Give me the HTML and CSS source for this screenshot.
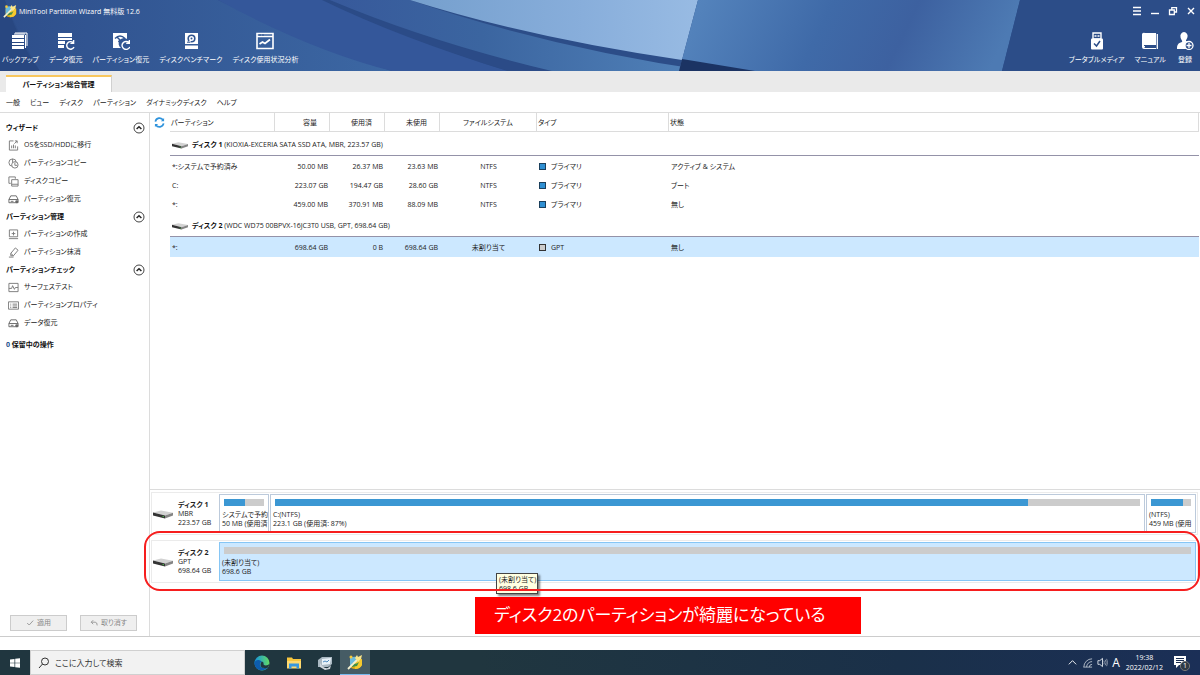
FILE: index.html
```html
<!DOCTYPE html>
<html lang="ja">
<head>
<meta charset="utf-8">
<title>MiniTool Partition Wizard</title>
<link rel="stylesheet" href="styles.css">
</head>
<body>
<svg class="defs" width="0" height="0" aria-hidden="true">
  <defs>
    <symbol id="i-wizard" viewBox="0 0 16 16">
      <path d="M3 5q5-3 12 0v6q-2 4-7 4-4 0-5-3z" fill="#d9a716"/><path d="M3 4q3-2 8-1l-1 6-5 3-2-1z" fill="#6bb9dc"/>
      <path d="M7 8q4 0 8-3v6q-2 4-7 4z" fill="#f5c92d"/><path d="M5 9q4 2 7-1l-2 4-5 1z" fill="#3f8f4a"/>
      <path d="M1 15 10 6" stroke="#f4f1cf" stroke-width="1.8"/><path d="m8 4 2-3 1 2 4-2-1 4-3 3z" fill="#fbe58a"/><circle cx="4" cy="3" r="1.500" fill="#f7c938"/>
    </symbol>
    <symbol id="i-up" viewBox="0 0 12 12"><circle cx="6" cy="6" r="5" fill="none" stroke="#444"/><path d="M3.600 7 6 4.800 8.400 7" fill="none" stroke="#222" stroke-width="1.500"/></symbol>
    <symbol id="i-drive" viewBox="0 0 20 10">
      <path d="M0 3.500 8 1.500l12 2.200L12 6.500z" fill="#d2d2d2"/><path d="m0 3.500 12 3v3L0 6.500z" fill="#333"/><path d="m12 6.500 8-2.800v2.800l-8 3z" fill="#858585"/><path d="m9.500 7.400 1.500.4" stroke="#4ec04e"/>
    </symbol>
    <symbol id="i-disk" viewBox="0 0 12 12"><path d="M1 6 3 2h6l2 4v3.500H1zM1 6h10" fill="none" stroke="#666"/><path d="M3 8h3" stroke="#666"/><circle cx="9.500" cy="8.500" r="1.600" fill="#666"/></symbol>
  </defs>
</svg>
<div class="app">
  <header class="banner">
    <svg class="banner-art" viewBox="0 0 1200 71" preserveAspectRatio="none" aria-hidden="true">
      <defs>
        <linearGradient id="g2"><stop offset="0" stop-color="#759fcd"/><stop offset=".6" stop-color="#88aedb"/><stop offset="1" stop-color="#98bbe3"/></linearGradient>
        <linearGradient id="g3" x1="0" y1="0" x2="1" y2=".1"><stop offset="0" stop-color="#5787bf"/><stop offset=".45" stop-color="#3f6aa8"/><stop offset=".7" stop-color="#3d61a0"/><stop offset="1" stop-color="#4d7ab3"/></linearGradient>
        <linearGradient id="g4"><stop offset="0" stop-color="#37599b"/><stop offset=".4" stop-color="#3b65a0"/><stop offset="1" stop-color="#5283ba"/></linearGradient>
        <linearGradient id="g5"><stop offset="0" stop-color="#2e4f8c"/><stop offset="1" stop-color="#3c67a3"/></linearGradient>
      </defs>
      <rect width="1200" height="71" fill="#2c4d88"/>
      <path d="M0 0h5Q20 45 40 71H0z" fill="#284781"/>
      <path d="M5 0H218Q320 48 392 71H40Q20 38 5 0z" fill="url(#g5)"/>
      <path d="M218 0H330Q430 48 508 71H392Q310 50 218 0z" fill="#34579a"/>
      <path d="M330 0Q420 40 552 71H508Q400 38 322 0z" fill="#2b4b87"/>
      <path d="M330 0h80Q550 48 710 71H552Q430 42 330 0z" fill="url(#g4)"/>
      <path d="M410 0h288l-16 60Q530 38 410 0z" fill="url(#g2)"/>
      <path d="M698 0h322l-18 71H679z" fill="url(#g3)"/>
      <path d="m682 59 73 12h-76z" fill="#1b3363"/>
      <path d="M1020 0h180v71h-198z" fill="#2c4d88"/>
    </svg>
    <div class="titlebar">
      <svg class="logo"><use href="#i-wizard"/></svg>
      <h1>MiniTool Partition Wizard 無料版 12.6</h1>
      <div class="window-buttons">
        <button aria-label="メニュー"><svg viewBox="0 0 10 10"><path d="M1 1.500h8M1 5h8M1 8.500h8" stroke="#fff" stroke-width="1.300"/></svg></button>
        <button aria-label="最小化"><svg viewBox="0 0 10 10"><path d="M1 7.500h8" stroke="#fff" stroke-width="1.400"/></svg></button>
        <button aria-label="元に戻す"><svg viewBox="0 0 10 10" fill="none" stroke="#fff" stroke-width="1.300"><path d="M1.500 4h4.800v4.500H1.500zM3.800 4V1.700h4.700V6H6.300"/></svg></button>
        <button aria-label="閉じる"><svg viewBox="0 0 10 10"><path d="m2 2 6 6M8 2 2 8" stroke="#fff" stroke-width="1.400"/></svg></button>
      </div>
    </div>
    <nav class="toolbar">
      <button class="tool"><svg viewBox="0 0 18 18"><path d="M4 1h12v13M3 2h11" fill="none" stroke="#fff"/><path d="M1 3h12v3H1zM1 7h12v3H1zM1 11h12v2H1zM1 14h12v3H1z" fill="#fff"/><path d="M14.500 3v13" stroke="#fff"/></svg>バックアップ</button>
      <button class="tool"><svg viewBox="0 0 18 18"><path d="M1 1h14v4H1zM1 6h14v2H1zM1 9h7v3H1zM1 13h6v3H1z" fill="#fff"/><path d="M16 10.500a3.800 3.800 0 1 0 1 4.500M16.600 8v3.400h-3.200" fill="none" stroke="#fff" stroke-width="1.400"/></svg>データ復元</button>
      <button class="tool"><svg viewBox="0 0 18 18"><path d="M1 1h14v6a5 5 0 0 0-6 9H1z" fill="#fff"/><path d="M3 6.500q5-5 10 0" fill="none" stroke="#315590" stroke-width="1.500"/><path d="m5 5 3 3-1.500 2" fill="none" stroke="#315590" stroke-width="1.500"/><path d="M17 10.700a4 4 0 1 0 .8 4.200M17.400 8v3.400h-3.200" fill="none" stroke="#fff" stroke-width="1.400"/></svg>パーティション復元</button>
      <button class="tool"><svg viewBox="0 0 18 18"><path d="M3 1h13v11H3zM3 13.500h13V17H3z" fill="#fff"/><circle cx="9.500" cy="6.500" r="3.300" fill="none" stroke="#315590" stroke-width="1.600"/><path d="m9.500 6.500-2 3.500" stroke="#fff" stroke-width="1.500"/><circle cx="9.500" cy="6.500" r="1" fill="#315590"/><path d="M5 10.200h3" stroke="#315590"/></svg>ディスクベンチマーク</button>
      <button class="tool"><svg viewBox="0 0 18 18"><path d="M1 1.500h16v15H1z" fill="none" stroke="#fff" stroke-width="1.600"/><path d="M1 4.500h16" stroke="#fff" stroke-width="1.500"/><path d="m3.500 12 3-2 2.500 1.500 5-4" fill="none" stroke="#fff" stroke-width="1.800"/><path d="M3 3h2M6 3h2" stroke="#315590"/></svg>ディスク使用状況分析</button>
      <span class="spacer"></span>
      <button class="tool"><svg viewBox="0 0 18 18"><path d="M5 1h8v6H5z" fill="none" stroke="#fff" stroke-width="1.400"/><path d="M6.500 4h2M9.500 4h2" stroke="#fff" stroke-width="1.600"/><rect x="3" y="6.500" width="12" height="11" rx="1" fill="#fff"/><path d="m6 11.500 2.500 2.500L12 9" fill="none" stroke="#2c4d88" stroke-width="1.500"/></svg>ブータブルメディア</button>
      <button class="tool"><svg viewBox="0 0 18 18"><path d="M4 1h11v12H4v2h11v2H3a2 2 0 0 1-2-2V3a2 2 0 0 1 3-2z" fill="#fff"/><path d="M3 13.500h12M3.500 15.500H15" stroke="#2c4d88"/><path d="M16.300 2v15" stroke="#fff" stroke-width="1.300"/></svg>マニュアル</button>
      <button class="tool"><svg viewBox="0 0 18 18"><path d="M8 0a4 4 0 0 1 3.500 5c-.3 2-2 3-1.500 4l3 1v7H1c0-4 1-6 5-7 1-1-1.500-3-1.500-5A4 4 0 0 1 8 0z" fill="#fff"/><circle cx="13" cy="13.500" r="4" fill="#2c4d88" stroke="#fff" stroke-width="1.300"/><path d="M13 11v5M10.500 13.500h5" stroke="#fff" stroke-width="1.300"/></svg>登録</button>
    </nav>
  </header>
  <div class="tabs" role="tablist"><button class="tab" role="tab" aria-selected="true">パーティション総合管理</button></div>
  <nav class="menubar">
    <button>一般</button><button>ビュー</button><button>ディスク</button><button>パーティション</button><button>ダイナミックディスク</button><button>ヘルプ</button>
  </nav>
  <div class="body">
    <aside class="sidebar">
      <section>
        <h2>ウィザード<svg><use href="#i-up"/></svg></h2>
        <button class="action"><svg viewBox="0 0 12 12" fill="none" stroke="#777"><path d="M6 1H1.500v10h9V7"/><path d="M4 9V6M6 9V5M8 9V6M7 4l3-3M7.500 1H10v2.500"/></svg>OSをSSD/HDDに移行</button>
        <button class="action"><svg viewBox="0 0 12 12" fill="none" stroke="#777"><circle cx="5" cy="5" r="4"/><path d="M5 5V1M5 5h5"/><circle cx="7.500" cy="7.500" r="3.500" fill="#fff"/><path d="M7.500 5v3H10"/></svg>パーティションコピー</button>
        <button class="action"><svg viewBox="0 0 12 12" fill="none" stroke="#777"><path d="M3 8H1V1h7v2"/><path d="M4 4h7v7H4zM4 9h7"/></svg>ディスクコピー</button>
        <button class="action"><svg><use href="#i-disk"/></svg>パーティション復元</button>
      </section>
      <section>
        <h2>パーティション管理<svg><use href="#i-up"/></svg></h2>
        <button class="action"><svg viewBox="0 0 12 12" fill="none" stroke="#777"><path d="M1.500 1h9v7.500h-9zM1 10.500h10M6 3v4M4 5h4"/></svg>パーティションの作成</button>
        <button class="action"><svg viewBox="0 0 12 12" fill="none" stroke="#777"><path d="m3 7 5-6 3 2.500-5 6H3zM3 7l3 2.500M1 11h5"/></svg>パーティション抹消</button>
      </section>
      <section>
        <h2>パーティションチェック<svg><use href="#i-up"/></svg></h2>
        <button class="action"><svg viewBox="0 0 12 12" fill="none" stroke="#777"><path d="M1 1.500h10v9H1z"/><path d="M1 7h3l1-3 2 4 1-2h3"/></svg>サーフェステスト</button>
        <button class="action"><svg viewBox="0 0 12 12" fill="none" stroke="#777"><path d="M.5 2h11v8H.5zM2.500 4.500h1M5 4.500h5M2.500 6.500h1M5 6.500h5M2.500 8.200h1M5 8.200h5"/></svg>パーティションプロパティ</button>
        <button class="action"><svg><use href="#i-disk"/></svg>データ復元</button>
      </section>
      <p class="pending"><span>0</span> 保留中の操作</p>
      <div class="commit">
        <button disabled><svg viewBox="0 0 10 10"><path d="m1.500 5 2.500 2.500L9 2" fill="none" stroke="#999" stroke-width="1.200"/></svg>適用</button>
        <button disabled><svg viewBox="0 0 10 10"><path d="M4 1.500 1.500 4 4 6.500M1.500 4h5Q9 4 9 8" fill="none" stroke="#999" stroke-width="1.200"/></svg>取り消す</button>
      </div>
    </aside>
    <main class="main">
      <div class="list">
        <button class="refresh" aria-label="更新"><svg viewBox="0 0 12 12" fill="none" stroke="#2f93dc" stroke-width="1.800"><path d="M1.500 5a4.600 4.600 0 0 1 8.500-1.500M10.500 7A4.600 4.600 0 0 1 2 8.500"/><path d="M11 1v3.500H7.500zM1 11V7.500h3.500z" fill="#2f93dc" stroke="none"/></svg></button>
        <table>
          <colgroup><col class="c-name"><col class="c-num"><col class="c-num"><col class="c-num"><col class="c-fs"><col class="c-type"><col></colgroup>
          <thead><tr><th>パーティション</th><th class="num">容量</th><th class="num">使用済</th><th class="num">未使用</th><th class="mid">ファイルシステム</th><th>タイプ</th><th>状態</th></tr></thead>
          <tbody>
            <tr class="group"><th colspan="7"><svg><use href="#i-drive"/></svg><b>ディスク 1</b> (KIOXIA-EXCERIA SATA SSD ATA, MBR, 223.57 GB)</th></tr>
            <tr><td>*:システムで予約済み</td><td class="num">50.00 MB</td><td class="num">26.37 MB</td><td class="num">23.63 MB</td><td class="mid">NTFS</td><td class="type"><i class="primary"></i>プライマリ</td><td>アクティブ &amp; システム</td></tr>
            <tr><td>C:</td><td class="num">223.07 GB</td><td class="num">194.47 GB</td><td class="num">28.60 GB</td><td class="mid">NTFS</td><td class="type"><i class="primary"></i>プライマリ</td><td>ブート</td></tr>
            <tr><td>*:</td><td class="num">459.00 MB</td><td class="num">370.91 MB</td><td class="num">88.09 MB</td><td class="mid">NTFS</td><td class="type"><i class="primary"></i>プライマリ</td><td>無し</td></tr>
            <tr class="group"><th colspan="7"><svg><use href="#i-drive"/></svg><b>ディスク 2</b> (WDC WD75 00BPVX-16JC3T0 USB, GPT, 698.64 GB)</th></tr>
            <tr class="selected"><td>*:</td><td class="num">698.64 GB</td><td class="num">0 B</td><td class="num">698.64 GB</td><td class="mid">未割り当て</td><td class="type"><i></i>GPT</td><td>無し</td></tr>
          </tbody>
        </table>
      </div>
      <section class="map">
        <div class="disk">
          <div class="disk-label"><svg><use href="#i-drive"/></svg><p><b>ディスク 1</b><br>MBR<br>223.57 GB</p></div>
          <div class="part small"><div class="usage"><span style="width:53%"></span></div><p>システムで予約<br>50 MB (使用済</p></div>
          <div class="part"><div class="usage"><span style="width:87%"></span></div><p>C:(NTFS)<br>223.1 GB (使用済: 87%)</p></div>
          <div class="part small"><div class="usage"><span style="width:81%"></span></div><p>(NTFS)<br>459 MB (使用</p></div>
        </div>
        <div class="disk">
          <div class="disk-label"><svg><use href="#i-drive"/></svg><p><b>ディスク 2</b><br>GPT<br>698.64 GB</p></div>
          <div class="part active"><div class="usage"></div><p>(未割り当て)<br>698.6 GB</p></div>
          <div class="tooltip" role="tooltip">(未割り当て)<br>698.6 GB</div>
          <div class="highlight"></div>
          <div class="callout">ディスク2のパーティションが綺麗になっている</div>
        </div>
      </section>
    </main>
  </div>
</div>
<footer class="taskbar">
  <button class="start" aria-label="スタート"><svg viewBox="0 0 12 12" fill="#fff"><path d="M1 2.500 5.500 2v3.700H1zM6.200 1.800 11 1.200v4.500H6.200zM1 6.300h4.500V10L1 9.500zM6.200 6.300H11v4.500l-4.800-.6z"/></svg></button>
  <label class="search"><svg viewBox="0 0 12 12" fill="none" stroke="#333"><circle cx="7" cy="4.500" r="3.500"/><path d="M4.500 7 1 11"/></svg><input type="text" aria-label="検索" placeholder="ここに入力して検索"></label>
  <button class="pin" aria-label="Edge"><svg viewBox="0 0 16 16"><defs><linearGradient id="e1" x2="1"><stop offset="0" stop-color="#1493df"/><stop offset="1" stop-color="#63dc63"/></linearGradient></defs><circle cx="8" cy="8" r="7.500" fill="url(#e1)"/><path d="M.5 8C1 4.500 5 4 8 6.500c-3 1-3 6 1.500 6.500 2 .2 4-.5 5-1.300C12 16.500 1 17.500.5 8z" fill="#0e5cad"/><path d="M8 6.500c2.500 1 1 2.500 2 3.500 1.500 1 4.500.5 5.500-1.500-.5 2-.7 2.700-1.500 4-3 1.500-8 .5-7.500-3 0-1.500 1-2.700 1.500-3z" fill="#20363f"/></svg></button>
  <button class="pin" aria-label="エクスプローラー"><svg viewBox="0 0 16 16"><path d="M1 2.500h5l1 1.500h8v9H1z" fill="#f8c63e"/><path d="M1 6h14v7.500H1z" fill="#ffd970"/><path d="M3 13.500V8.500h10v5h-2.500v-2h-5v2z" fill="#3997df"/></svg></button>
  <button class="pin" aria-label="ディスク ツール"><svg viewBox="0 0 16 16"><path d="m1 5 4-3h10v7l-4 3H1z" fill="#aab8c2"/><path d="m5 4 9-1-1 6-8 1z" fill="#e8f1f7"/><path d="M3 8q3 6 8 5l3-3-1 4-5 1-5-3z" fill="#d0d6dc"/><path d="m6 7 2-1 2 1 2-2" fill="none" stroke="#4f8cc0"/></svg></button>
  <button class="pin current" aria-label="Partition Wizard"><svg><use href="#i-wizard"/></svg></button>
  <span class="spacer"></span>
  <div class="tray">
    <svg viewBox="0 0 12 12"><path d="m2 8 4-4 4 4" fill="none" stroke="#fff"/></svg>
    <svg viewBox="0 0 12 12" fill="none" stroke="#b6becb"><path d="M2 11A9 9 0 0 1 11 2M5 11a6 6 0 0 1 6-6M8 11a3 3 0 0 1 3-3M1.500 11H11"/></svg>
    <svg viewBox="0 0 12 12" fill="none" stroke="#dde2ea"><path d="M1 4h2l3-2.500v9L3 8H1z"/><path d="M7.500 4q1 2 0 4M9 3q2 3 0 6M10.500 2q2 4 0 8" stroke="#8d97aa"/></svg>
    <span class="ime">A</span>
    <time datetime="2022-02-12T19:38">19:38<br>2022/02/12</time>
    <button aria-label="通知"><svg viewBox="0 0 18 18"><path d="M1 2h12v9H6l-3 3v-3H1z" fill="#fff"/><path d="M3 4.500h8M3 6.500h8M3 8.500h5" stroke="#1b2e52"/><circle cx="12" cy="12" r="4.600" fill="#303a45" stroke="#777"/></svg><span>1</span></button>
  </div>
</footer>
</body>
</html>
```
FILE: styles.css
```css
* { box-sizing: border-box; }
body {
  margin: 0;
  min-height: 100vh;
  display: flex;
  flex-direction: column;
  background: #fff;
  color: #222;
  font: 7px/10px "Open Sans", "Noto Sans CJK JP", sans-serif;
  font-feature-settings: "palt";
}
button, input { font: inherit; font-feature-settings: inherit; color: inherit; border: 0; padding: 0; margin: 0; background: none; white-space: nowrap; }
h1, h2, p { margin: 0; font: inherit; }
.defs { position: absolute; }
.spacer { flex: 1; }
.app { flex: 1; display: flex; flex-direction: column; margin-bottom: 13px; border-bottom: 1px solid #ccc; }

.banner { position: relative; height: 71px; color: #fff; background: #2c4d88; }
.banner-art { position: absolute; inset: 0; width: 100%; height: 100%; }
.titlebar { position: relative; display: flex; align-items: center; height: 22px; padding: 0 4px 0 3px; gap: 2px; }
.titlebar h1 { flex: 1; padding-top: 1px; }
.logo { width: 14px; height: 14px; }
.window-buttons { display: flex; gap: 8px; }
.window-buttons svg { display: block; width: 10px; height: 10px; }
.toolbar { position: relative; display: flex; gap: 10px; padding: 10px 6px 0 2px; }
.tool { display: flex; flex-direction: column; align-items: center; gap: 5px; }
.tool svg { width: 18px; height: 18px; }

.tabs { display: flex; height: 21px; padding: 4px 6px 0; background: #eaeaea; }
.tab { width: 106px; background: #fff; border-top: 2px solid #f8c75e; border-right: 1px solid #d0d0d0; font-weight: 700; color: #111; }
.menubar { display: flex; align-items: center; gap: 10px; height: 21px; padding: 2px 6px 0; border-bottom: 1px solid #dcdcdc; }

.body { flex: 1; display: flex; }
.sidebar { width: 150px; flex: none; display: flex; flex-direction: column; padding: 6px 0 5px; border-right: 1px solid #dcdcdc; }
.sidebar h2 { display: flex; align-items: center; justify-content: space-between; height: 17px; padding: 0 4px 0 6px; font-weight: 700; color: #111; }
.sidebar h2 svg { width: 12px; height: 12px; }
.action { display: flex; align-items: center; gap: 5px; height: 18px; padding-left: 8px; }
.action svg { width: 11px; height: 11px; }
.pending { padding: 8px 6px 0; font-weight: 700; color: #111; }
.pending span { color: #1e4e8c; }
.commit { display: flex; gap: 13px; margin-top: auto; padding-left: 10px; }
.commit button { display: flex; align-items: center; justify-content: center; gap: 3px; width: 57px; height: 16px; border: 1px solid #ccc; background: #efefef; color: #888; }
.commit svg { width: 8px; height: 8px; }

.main { flex: 1; min-width: 0; display: flex; flex-direction: column; }
.list { flex: 1; display: flex; align-items: flex-start; padding-right: 1px; }
.refresh { width: 20px; padding: 4px; }
.refresh svg { display: block; width: 11px; height: 11px; }
table { flex: 1; border-collapse: separate; border-spacing: 0; table-layout: fixed; width: 100%; white-space: nowrap; }
.c-name { width: 105px; } .c-num { width: 55px; } .c-fs { width: 97px; } .c-type { width: 132px; }
th, td { height: 19px; padding: 2px 2px 0; text-align: left; font-weight: 400; }
thead th { padding: 1px 1px 0; border-right: 1px solid #dcdcdc; border-bottom: 1px solid #dcdcdc; }
.num { text-align: right; }
thead .num { padding-right: 12px; }
.mid { text-align: center; }
.group th { height: 24px; border-bottom: 1px solid #9492a8; vertical-align: middle; }
.group svg { width: 16px; height: 8px; margin-right: 4px; vertical-align: -2px; }
.group b { color: #111; }
.type i { display: inline-block; width: 7px; height: 7px; margin-right: 5px; border: 1px solid #333; background: #ccc; vertical-align: -1px; }
.type .primary { background: #2f8fd2; border-color: #1b3f5c; }
.selected td { height: 20px; background: #cce8ff; }

.map { height: 147px; padding: 2px 2px 0 1px; border-top: 1px solid #dcdcdc; }
.disk { position: relative; display: flex; gap: 1px; height: 43px; padding: 1px; border: 1px solid #ebebeb; margin-bottom: 5px; }
.disk-label { display: flex; align-items: center; gap: 5px; width: 65px; flex: none; }
.disk-label svg { width: 20px; height: 10px; }
.part { flex: 1; min-width: 0; overflow: hidden; padding: 4px 4px 0; border: 1px solid #bccadb; white-space: nowrap; }
.part.small { flex: none; width: 50px; }
.part p { margin: 4px -4px 0 -2px; line-height: 9px; }
.disk-label p { line-height: 9px; }
.usage { height: 7px; background: #ccc; }
.usage span { display: block; height: 100%; background: #3b97d3; }
.part.active { background: #cce8ff; border-color: #86c6f5; }
.tooltip { position: absolute; left: 344px; top: 32px; padding: 1px 1px 0 2px; border: 1px solid #444; background: #ffffe1; line-height: 9px; box-shadow: 2px 2px 2px rgb(0 0 0 / 50%); }
.highlight { position: absolute; inset: -10px -3px -9px -8px; border: 2px solid #f61e1e; border-radius: 16px; }
.callout { position: absolute; left: 323px; top: 56px; width: 386px; height: 37px; padding-left: 19px; background: #f00; color: #fff; font-size: 17px; line-height: 36px; white-space: nowrap; }

.taskbar { display: flex; height: 25px; color: #fff; background: linear-gradient(90deg, #20363f, #20363f 40%, #1a3049 75%, #1b2f57); }
.start { width: 30px; display: grid; place-items: center; }
.start svg { width: 12px; height: 12px; }
.search { display: flex; align-items: center; gap: 5px; width: 215px; padding-left: 7px; background: #f2f2f2; border: 1px solid #d0d0d0; }
.search svg { width: 12px; height: 12px; }
.search input { flex: 1; min-width: 0; outline: 0; font-size: 8px; }
.search input::placeholder { color: #333; opacity: 1; }
.pin { width: 31px; display: grid; place-items: center; }
.search + .pin { width: 33px; }
.pin svg { width: 16px; height: 16px; }
.pin.current { width: 30px; background: #465c65; border-bottom: 1px solid #76b9ed; }
.tray { display: flex; align-items: center; gap: 4px; padding-right: 9px; }
.tray svg { width: 11px; height: 11px; }
.ime { font-size: 12px; }
.tray time { text-align: center; margin: 0 6px 0 2px; }
.tray button { position: relative; }
.tray button svg { display: block; width: 18px; height: 18px; }
.tray button span { position: absolute; right: 4px; bottom: 1px; }
```
